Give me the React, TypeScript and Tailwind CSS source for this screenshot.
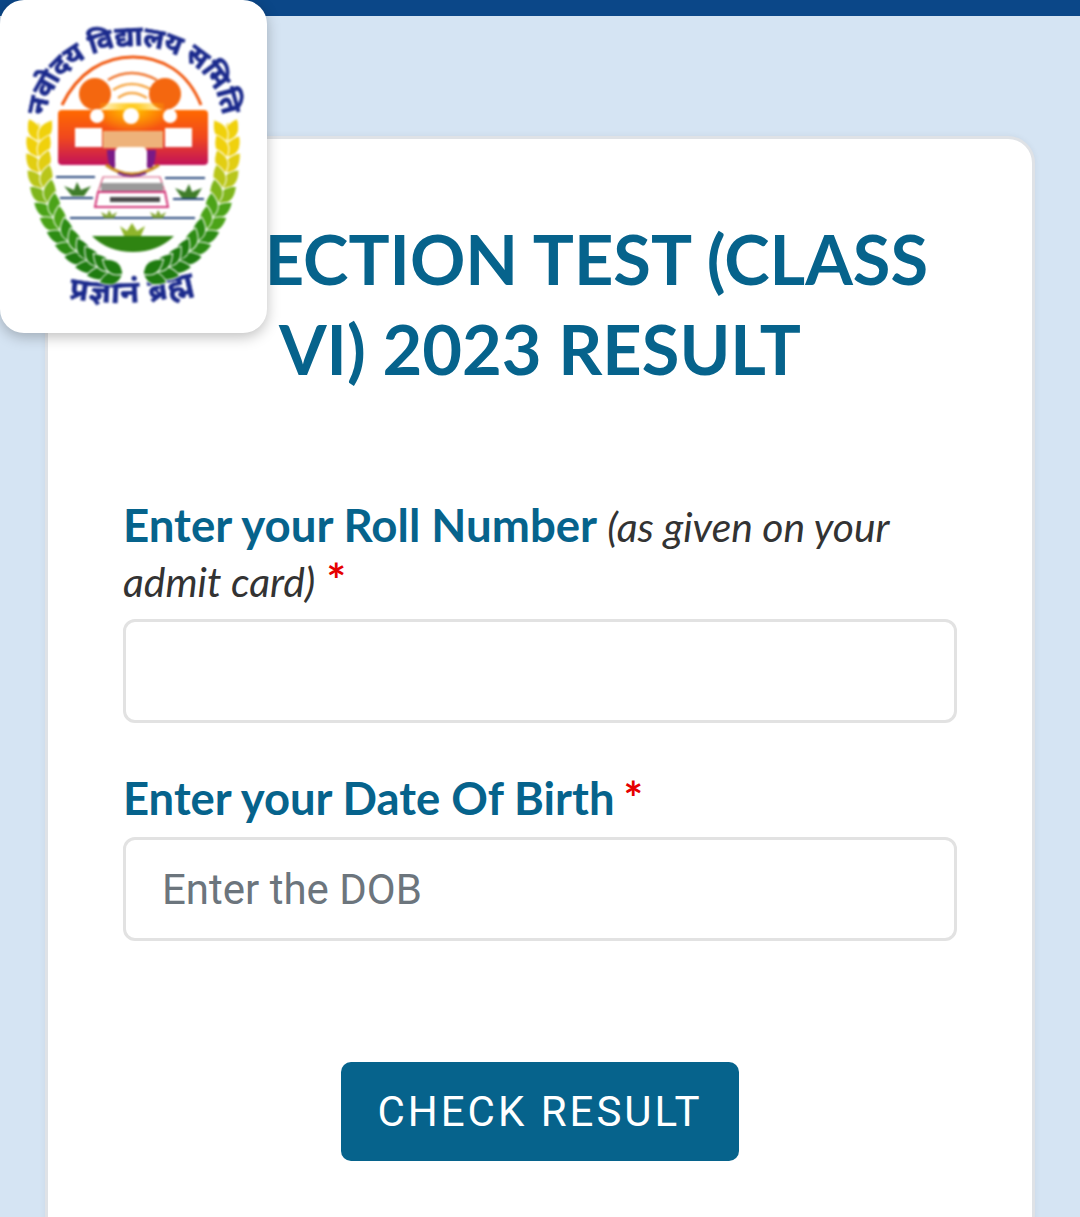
// wheat ears: pairs of leaves along one side of the wreath, mirrored for the other
const leaves = Array.from({ length: 13 }, (_, i) => {
  const deg = -4 + i * 7.3;
  const a = (deg * Math.PI) / 180;
  const x = 133 - 94 * Math.cos(a);
  const y = 150 + 125 * Math.sin(a);
  // direction of the stem, pointing back at the tip of the ear
  const tangent = (Math.atan2(-125 * Math.cos(a), -94 * Math.sin(a)) * 180) / Math.PI + 90;
  return { x, y, tangent };
});

const leafColor = (y: number) => {
  if (y < 165) return "#f0d10c";
  if (y < 182) return "#e2ce12";
  if (y < 198) return "#b9c61a";
  if (y < 214) return "#7fb61c";
  if (y < 232) return "#4ba318";
  if (y < 255) return "#2d8c14";
  return "#1f7c10";
};

const leafPath = "M0 0 Q13 -10 0 -25 Q-13 -10 0 0 Z";

function Ear() {
  return (
    <g stroke="#fff" strokeWidth="1">
      <path d="M38 150 Q26 134 38 122 Q50 134 38 150 Z" fill="#f0d10c" />
      {leaves.map((l, i) => (
        <g key={i} fill={leafColor(l.y)}>
          <path d={leafPath} transform={`translate(${l.x} ${l.y}) rotate(${l.tangent - 28})`} />
          <path d={leafPath} transform={`translate(${l.x} ${l.y}) rotate(${l.tangent + 28})`} />
        </g>
      ))}
    </g>
  );
}

function Logo() {
  return (
    <svg viewBox="0 0 267 333" className="h-full w-full blur-[0.8px]">
      <defs>
        <linearGradient id="band" x1="0" y1="0" x2="0" y2="1">
          <stop offset="0" stopColor="#ff6a00" />
          <stop offset="0.5" stopColor="#f0481e" />
          <stop offset="1" stopColor="#c2125a" />
        </linearGradient>
        <radialGradient id="glow" cx="0.5" cy="0.15" r="0.6">
          <stop offset="0" stopColor="#ffc400" />
          <stop offset="1" stopColor="#ffc400" stopOpacity="0" />
        </radialGradient>
        <path id="topArc" d="M46 120 A88 74 0 0 1 222 120" />
        <path id="bottomArc" d="M68 298 Q130 310 196 292" />
      </defs>

      {/* motto round the top */}
      <text fill="#1b2a8c" stroke="#1b2a8c" strokeWidth="0.7" fontSize="28" fontWeight="700" fontFamily="'Noto Sans', sans-serif">
        <textPath href="#topArc" startOffset="50%" textAnchor="middle" textLength="246" lengthAdjust="spacing">
          नवोदय विद्यालय समिति
        </textPath>
      </text>
      <text fill="#1b2a8c" stroke="#1b2a8c" strokeWidth="0.5" fontSize="31" fontWeight="700" fontFamily="'Noto Sans', sans-serif">
        <textPath href="#bottomArc" startOffset="50%" textAnchor="middle" textLength="128" lengthAdjust="spacing">
          प्रज्ञानं ब्रह्म
        </textPath>
      </text>

      {/* wreath */}
      <Ear />
      <g transform="matrix(-1 0 0 1 266 0)">
        <Ear />
      </g>

      {/* arc and heads */}
      <path d="M62 105 C78 72 104 57 133 57 C162 57 188 72 201 105" fill="none" stroke="#f15a12" strokeWidth="3" />
      <path d="M108 80 Q131 66 157 80" fill="none" stroke="#f07a35" strokeWidth="2.5" />
      <path d="M113 90 Q131 78 152 90" fill="none" stroke="#f6a94a" strokeWidth="2.5" />
      <path d="M118 98 Q131 88 147 98" fill="none" stroke="#f6a94a" strokeWidth="2.5" />
      <circle cx="95" cy="94" r="16" fill="#f4670f" />
      <circle cx="165" cy="94" r="16" fill="#f4670f" />

      {/* band */}
      <rect x="58" y="110" width="150" height="55" rx="4" fill="url(#band)" />
      <rect x="100" y="103" width="64" height="40" fill="url(#glow)" />
      <circle cx="97" cy="116" r="7" fill="#fff" />
      <circle cx="131" cy="116" r="8" fill="#fff" />
      <circle cx="170" cy="116" r="7" fill="#fff" />
      <rect x="75" y="128" width="27" height="19" fill="#fff" />
      <rect x="165" y="128" width="27" height="19" fill="#fff" />
      <rect x="103" y="131" width="60" height="17" fill="#eeb27a" />
      <path d="M107 150 H115 V168 H111 Q107 160 107 150 Z" fill="#7a1a86" />
      <path d="M147 150 H156 Q156 160 152 168 H147 Z" fill="#7a1a86" />
      <rect x="115" y="147" width="32" height="21" rx="5" fill="#fff" />
      <path d="M106 165 Q131 183 159 165" fill="none" stroke="#c98a1c" strokeWidth="3" />
      <path d="M118 173 Q131 179 146 173" fill="none" stroke="#6a1a8a" strokeWidth="2" />

      {/* books */}
      <path d="M103 177 H160 L165 192 H98 Z" fill="#fff" stroke="#d4547a" strokeWidth="1.2" />
      <rect x="101" y="183" width="62" height="8" fill="#9a9a9a" />
      <path d="M98 192 H165 L168 207 H95 Z" fill="#fff" stroke="#d4387a" strokeWidth="2" />
      <rect x="110" y="197" width="50" height="5" fill="#4b4b4b" />

      {/* water lines and plants */}
      <path d="M56 177 H95 M60 198 H93 M165 178 H205 M173 199 H204 M70 218 H195" stroke="#25467c" strokeWidth="2.2" />
      <path d="M64 186 L74 190 L77 182 L81 190 L91 186 L84 196 H72 Z" fill="#3f7c2a" />
      <path d="M175 188 L185 192 L189 184 L192 192 L202 188 L196 198 H182 Z" fill="#3f7c2a" />
      <path d="M101 212 L107 215 L109 210 L112 215 L117 212 L114 218 H104 Z" fill="#86a83a" />
      <path d="M150 212 L156 215 L158 210 L161 215 L166 212 L163 218 H153 Z" fill="#86a83a" />
      <path d="M120 226 L127 231 L132 223 L137 231 L145 226 L140 238 H125 Z" fill="#8fb52c" />
      <path d="M92 236 H174 Q158 252 133 252 Q108 252 92 236 Z" fill="#2f8412" />
    </svg>
  );
}

export default function App() {
  return (
    <div className="relative h-[1217px] overflow-hidden bg-[#d5e4f3] font-['Lato',sans-serif]">
      <div className="h-4 bg-[#0b4788]" />

      {/* logo */}
      <div className="absolute top-0 left-0 z-10 h-[333px] w-[267px] rounded-[24px] bg-white shadow-[0_4px_14px_rgba(0,0,0,0.25)]">
        <Logo />
      </div>

      <main className="mx-12 mt-[123px] min-h-[1200px] rounded-[24px] bg-white px-[76px] pt-[75px] shadow-[0_0_0_3px_#dfe2e6,0_0_6px_3px_rgba(0,0,0,0.06)]">
        <h1 className="-mx-10 text-center text-[68.6px] leading-[90px] font-bold text-[#06638c]">
          SELECTION TEST (CLASS
          <br />
          VI) 2023 RESULT
        </h1>

        <form className="mt-[103px]">
          <label className="-ml-px block text-[45.6px] leading-[55px] font-bold text-[#06638c]">
            Enter your Roll Number{" "}
            <span className="text-[40.8px] leading-none font-normal text-[#333333] italic">
              (as given on your admit card)
            </span>{" "}
            <span className="text-[46px] leading-none font-bold text-[#e60000]">*</span>
          </label>
          <input
            type="text"
            className="-mx-px mt-3 block h-[104px] w-[calc(100%+2px)] rounded-xl border-[3px] border-[#e2e2e2] bg-white"
          />

          <label className="mt-[47px] -ml-px block text-[45.4px] leading-[55px] font-bold text-[#06638c]">
            Enter your Date Of Birth{" "}
            <span className="-ml-[2px] text-[46px] leading-none font-bold text-[#e60000]">*</span>
          </label>
          <input
            type="text"
            placeholder="Enter the DOB"
            className="-mx-px mt-3 block h-[104px] w-[calc(100%+2px)] rounded-xl border-[3px] border-[#e2e2e2] bg-white px-9 font-['Roboto',sans-serif] text-[42px] placeholder:text-[#6c757d]"
          />

          <div className="mt-[121px] flex justify-center">
            <button
              type="button"
              className="h-[99px] w-[398px] rounded-[10px] bg-[#06638c] font-['Roboto',sans-serif] text-[42px] tracking-[3px] text-white"
            >
              CHECK RESULT
            </button>
          </div>
        </form>
      </main>
    </div>
  );
}
